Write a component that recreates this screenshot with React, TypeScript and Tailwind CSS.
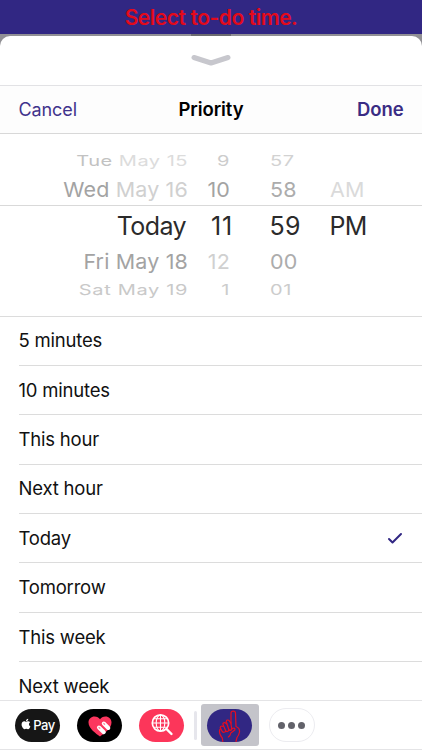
import { useState } from 'react';
import { FaApple } from 'react-icons/fa';
import clsx from 'clsx';

interface WheelRow {
  day: string;
  date?: string;
  hour: string;
  minute: string;
  period?: string;
  row: string;
  text: string;
  dayColor: string;
  dateColor: string;
  hourColor: string;
  minuteColor: string;
}

const wheelRows: WheelRow[] = [
  {
    day: 'Tue', date: 'May 15', hour: '9', minute: '57',
    row: 'h-7 pt-px',
    text: 'text-[20px] tracking-[0.5px] scale-y-[0.73]',
    dayColor: 'text-[#c2c2c2]', dateColor: 'text-[#dcdcdc]',
    hourColor: 'text-[#cccccc]', minuteColor: 'text-[#d2d2d2]',
  },
  {
    day: 'Wed', date: 'May 16', hour: '10', minute: '58', period: 'AM',
    row: 'h-[31px]',
    text: 'text-[21.5px] tracking-[0.15px] scale-y-[0.96]',
    dayColor: 'text-[#a3a3a3]', dateColor: 'text-[#d0d0d0]',
    hourColor: 'text-[#a3a3a3]', minuteColor: 'text-[#acacac]',
  },
  {
    day: 'Today', hour: '11', minute: '59', period: 'PM',
    row: 'h-[41px] border-t border-[#d9d9d9]',
    text: 'text-[25px] tracking-[-0.6px]',
    dayColor: 'text-[#2b2b2b]', dateColor: 'text-[#2b2b2b]',
    hourColor: 'text-[#2b2b2b] tracking-[0.8px]', minuteColor: 'text-[#2b2b2b] tracking-[0.2px]',
  },
  {
    day: 'Fri', date: 'May 18', hour: '12', minute: '00',
    row: 'h-[30px] pt-px',
    text: 'text-[21.5px] tracking-[0.15px] scale-y-[0.96]',
    dayColor: 'text-[#a3a3a3]', dateColor: 'text-[#a3a3a3]',
    hourColor: 'text-[#d0d0d0]', minuteColor: 'text-[#acacac]',
  },
  {
    day: 'Sat', date: 'May 19', hour: '1', minute: '01',
    row: 'h-[27px]',
    text: 'text-[20px] tracking-[0.65px] scale-y-[0.73]',
    dayColor: 'text-[#c9c9c9]', dateColor: 'text-[#c9c9c9]',
    hourColor: 'text-[#cccccc]', minuteColor: 'text-[#cccccc]',
  },
];

const options = [
  '5 minutes',
  '10 minutes',
  'This hour',
  'Next hour',
  'Today',
  'Tomorrow',
  'This week',
  'Next week',
];

function TimeWheel() {
  return (
    <div className="h-[181.5px] shrink-0 pt-3 leading-none">
      {wheelRows.map((r) => (
        <div key={r.day} className={clsx('flex items-center', r.row)}>
          <div className={clsx('flex w-full items-center whitespace-nowrap', r.text)}>
            <div className={r.date ? 'w-[188px] text-right' : 'w-[186px] text-right'}>
              <span className={r.dayColor}>{r.day}</span>
              {r.date && <span className={r.dateColor}> {r.date}</span>}
            </div>
            <div className={clsx('text-right', r.date ? 'w-[42px]' : 'w-[47px]', r.hourColor)}>{r.hour}</div>
            <div className={clsx('w-[60px]', r.date ? 'ml-[40px]' : 'ml-[36.5px]', r.minuteColor)}>{r.minute}</div>
            <div className={r.period === 'AM' ? 'text-[#dadada]' : 'text-[#2b2b2b]'}>{r.period}</div>
          </div>
        </div>
      ))}
    </div>
  );
}

function HeartIcon() {
  return (
    <svg className="mt-px" width="26" height="24" viewBox="0 0 26 24">
      <path
        d="M13 22.500C9 19.500 1.500 14.500 1.500 8.500C1.500 5 4.300 2.500 7.500 2.500C10 2.500 12 3.700 13 5.300C14 3.700 16 2.500 18.500 2.500C21.700 2.500 24.500 5 24.500 8.500C24.500 14.500 17 19.500 13 22.500Z"
        fill="#fc365e"
      />
      <g stroke="#fff" strokeWidth="4" strokeLinecap="round">
        <path d="M12 13.500L16.800 18.200" />
        <path d="M16.800 9.500L21.300 14" />
      </g>
      <g stroke="#fc8ca3" strokeWidth="1.300" strokeLinecap="round">
        <path d="M12 13.500l0.800 0.800" />
        <path d="M16.800 9.500l0.800 0.800" />
      </g>
    </svg>
  );
}

function GlobeSearchIcon() {
  return (
    <svg width="24" height="24" viewBox="0 0 24 24" fill="none" stroke="#fff">
      <circle cx="10.500" cy="10" r="8.200" strokeWidth="1.700" />
      <path d="M10.500 2v16M2.500 10h16M4 5.800h13M4 14.200h13" strokeWidth="1.100" />
      <ellipse cx="10.500" cy="10" rx="4.300" ry="8" strokeWidth="1.100" />
      <path d="M16.500 16l5 5" strokeWidth="2.400" strokeLinecap="round" />
    </svg>
  );
}

function PointingHandIcon() {
  return (
    <svg
      width="24"
      height="33"
      viewBox="0 0 24 33"
      fill="none"
      stroke="#e80d20"
      strokeWidth="1.200"
      strokeLinecap="round"
      strokeLinejoin="round"
    >
      <path d="M13 15V4.200Q13 2.200 15.200 2.200Q17.400 2.200 17.500 4.200L18 17.500Q22 19 21.500 23Q21 26 19 28.500L18 32.500" />
      <path d="M13 14L10.800 11.300Q8.600 10.300 8.200 12.500L10.800 20.500Q12.300 22 13.800 20.500L13 15" />
      <path d="M8.800 15L6.800 13.500Q4.800 13.500 5 15.500L7.800 22Q9.500 23.500 11 21" />
      <path d="M5.300 17.500Q2.600 16.500 2.200 18.500L4.200 22.500Q6 24.200 7.800 22.200" />
      <path d="M2.300 20Q1 21.500 1.800 24.500Q2.500 27 4.300 29L4.800 32.500" />
      <path d="M13.800 19.500Q17.800 18.500 16.800 21L12.800 24Q12.300 27 10.300 28" />
    </svg>
  );
}

export default function App() {
  const [selected, setSelected] = useState('Today');

  return (
    <div className="flex h-[750px] w-[422px] flex-col overflow-hidden bg-white font-['Inter','Liberation_Sans',sans-serif] text-black">
      <header className="h-[34px] shrink-0 bg-[#312783] text-center text-[21px] leading-[35px] font-semibold tracking-[-0.45px] text-[#e30a1b]">
        Select to-do time.
      </header>

      <div className="shrink-0 bg-[#919095]">
        <div className="mx-auto h-0.5 w-10 bg-[#6c6b70]" />
        <div className="flex h-[50px] justify-center rounded-t-[10px] border-b border-[#e2e2e5] bg-white pt-[18px]">
          <svg width="40" height="13" viewBox="0 0 40 13" fill="none">
            <path d="M3 3.500L20 9L37 3.500" stroke="#c7c7cd" strokeWidth="5" strokeLinecap="round" strokeLinejoin="round" />
          </svg>
        </div>
      </div>

      <nav className="grid h-12 shrink-0 grid-cols-3 items-center border-b border-[#d8d8d8] bg-[#fdfdfd] px-[18.5px] text-[18px] tracking-[-0.1px]">
        <button className="text-left text-[#41338c]">Cancel</button>
        <h1 className="text-center text-[18.5px] font-semibold">Priority</h1>
        <button className="text-right text-[18.5px] font-semibold text-[#3a2c84]">Done</button>
      </nav>

      <TimeWheel />

      <ul className="min-h-0 flex-1 overflow-hidden border-t border-[#dcdcdc] pl-[18.5px]">
        {options.map((option) => (
          <li
            key={option}
            onClick={() => setSelected(option)}
            className="flex h-[49.4px] items-center justify-between border-b border-[#dcdcdc] pt-px pr-[19px] text-[18.5px] tracking-[-0.2px] text-[#111]"
          >
            {option}
            {option === selected && (
              <svg width="16" height="13" viewBox="0 0 16 13" fill="none">
                <path d="M2 7L5.500 10.500L14 2" stroke="#312783" strokeWidth="2" strokeLinecap="round" strokeLinejoin="round" />
              </svg>
            )}
          </li>
        ))}
      </ul>

      <footer className="flex h-[50px] shrink-0 items-center border-y border-[#e4e4e6] bg-white pl-[15px]">
        <button className="flex h-[33px] w-[45px] items-center justify-center gap-px rounded-[17px] bg-[#161616] text-white">
          <FaApple className="mb-0.5 size-3" />
          <span className="text-[13px] leading-none font-medium tracking-[-0.4px]">Pay</span>
        </button>
        <button className="ml-[17px] flex h-[33px] w-[45px] items-center justify-center rounded-[17px] bg-black">
          <HeartIcon />
        </button>
        <button className="ml-[17px] flex h-[33px] w-[45px] items-center justify-center rounded-[17px] bg-[#fc365a]">
          <GlobeSearchIcon />
        </button>
        <div className="ml-[10px] h-[29px] w-[3px] rounded-full bg-[#e6e6ec]" />
        <button className="ml-[3.5px] flex h-[42px] w-[58px] items-center justify-center rounded-[3px] bg-[#c4c4ca]">
          <span className="flex h-[33px] w-[45px] items-center justify-center overflow-hidden rounded-[17px] bg-[#312783]">
            <PointingHandIcon />
          </span>
        </button>
        <button className="ml-[10px] flex h-[34px] w-[46px] items-center justify-center gap-[3px] rounded-[17px] border border-[#ececf0]">
          <span className="size-[7px] rounded-full bg-[#62626a]" />
          <span className="size-[7px] rounded-full bg-[#62626a]" />
          <span className="size-[7px] rounded-full bg-[#62626a]" />
        </button>
      </footer>
    </div>
  );
}
